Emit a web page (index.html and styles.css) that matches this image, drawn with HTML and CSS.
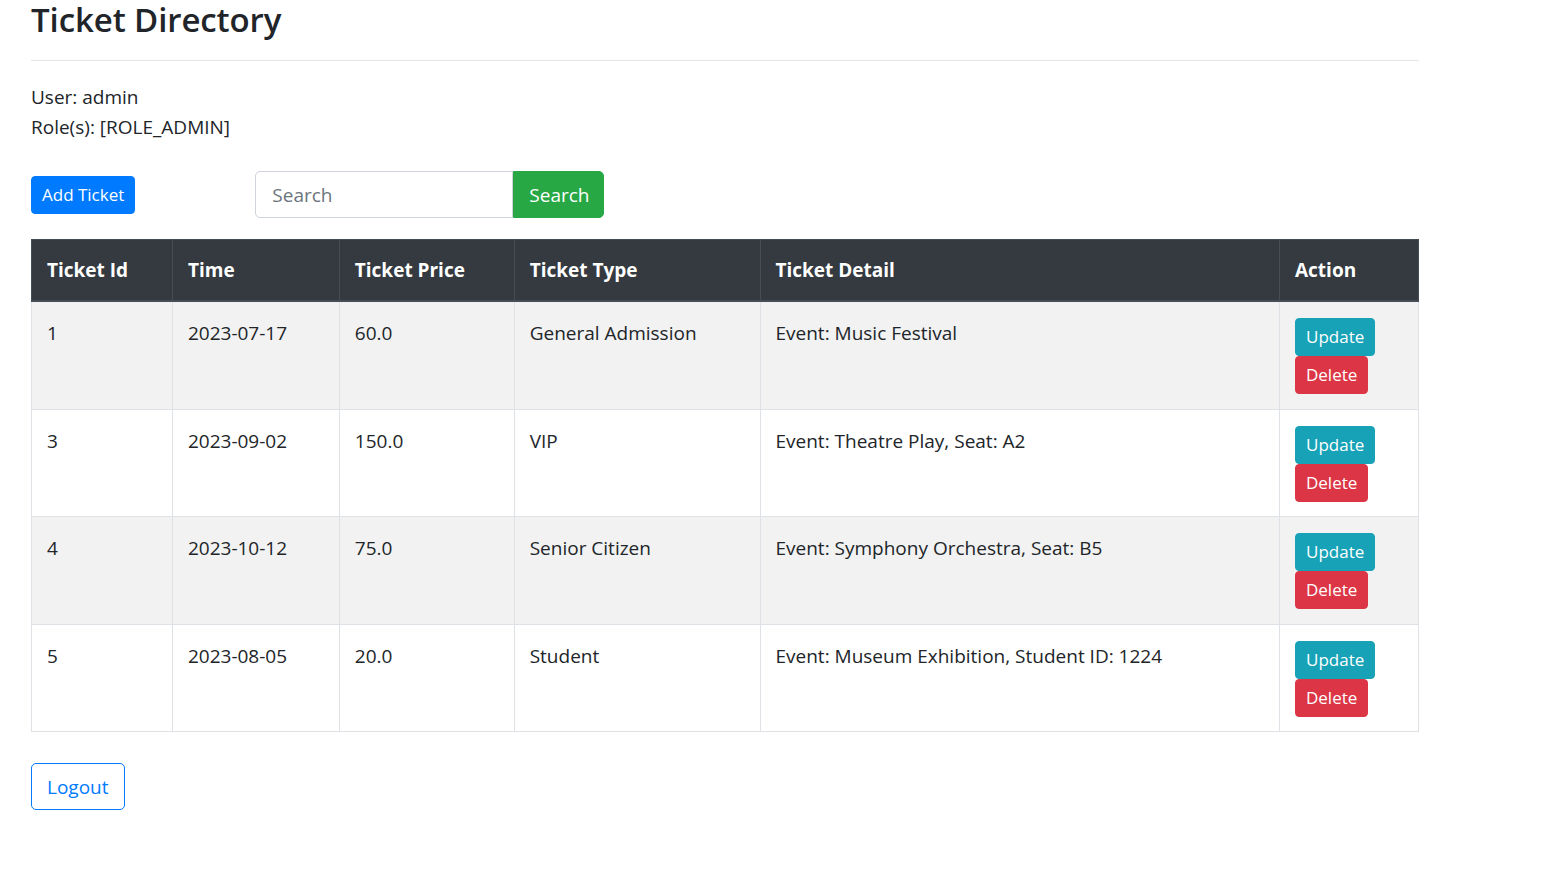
FILE: index.html
```html
<!DOCTYPE html>
<html lang="en">
<head>
<meta charset="utf-8">
<title>Ticket Directory</title>
<link rel="stylesheet" href="styles.css">
</head>
<body>
<div class="page">
  <h2 class="title">Ticket Directory</h2>
  <hr class="divider">
  <div class="user-info">
    <div>User: admin</div>
    <div>Role(s): [ROLE_ADMIN]</div>
  </div>
  <div class="toolbar">
    <a class="btn btn-primary add-btn" href="#">Add Ticket</a>
    <form class="search-group" onsubmit="return false">
      <input class="search-input" type="text" placeholder="Search">
      <button class="btn-lg btn-success search-btn" type="submit">Search</button>
    </form>
  </div>
  <table class="tickets">
    <thead>
      <tr>
        <th class="c-id">Ticket Id</th>
        <th class="c-time">Time</th>
        <th class="c-price">Ticket Price</th>
        <th class="c-type">Ticket Type</th>
        <th class="c-detail">Ticket Detail</th>
        <th class="c-action">Action</th>
      </tr>
    </thead>
    <tbody>
      <tr>
        <td>1</td><td>2023-07-17</td><td>60.0</td><td>General Admission</td><td>Event: Music Festival</td>
        <td><a class="btn btn-info" href="#">Update</a><a class="btn btn-danger" href="#">Delete</a></td>
      </tr>
      <tr>
        <td>3</td><td>2023-09-02</td><td>150.0</td><td>VIP</td><td>Event: Theatre Play, Seat: A2</td>
        <td><a class="btn btn-info" href="#">Update</a><a class="btn btn-danger" href="#">Delete</a></td>
      </tr>
      <tr>
        <td>4</td><td>2023-10-12</td><td>75.0</td><td>Senior Citizen</td><td>Event: Symphony Orchestra, Seat: B5</td>
        <td><a class="btn btn-info" href="#">Update</a><a class="btn btn-danger" href="#">Delete</a></td>
      </tr>
      <tr>
        <td>5</td><td>2023-08-05</td><td>20.0</td><td>Student</td><td>Event: Museum Exhibition, Student ID: 1224</td>
        <td><a class="btn btn-info" href="#">Update</a><a class="btn btn-danger" href="#">Delete</a></td>
      </tr>
    </tbody>
  </table>
  <a class="btn-lg btn-outline-primary logout" href="#">Logout</a>
</div>
</body>
</html>
```
FILE: styles.css
```css
* { box-sizing: border-box; }
html, body { margin: 0; padding: 0; background: #fff; }
body {
  font-family: "Open Sans", "Noto Sans", sans-serif;
  font-size: 19px;
  line-height: 30px;
  color: #212529;
}
.page {
  width: 1388px;
  margin-left: 31px;
}
.title {
  font-size: 33px;
  font-weight: 600;
  line-height: 40px;
  margin: 0;
  letter-spacing: -0.1px;
}
.divider {
  border: 0;
  border-top: 1px solid rgba(0,0,0,.1);
  margin: 20px 0 21px 0;
}
.user-info { line-height: 30px; }
.toolbar {
  display: flex;
  align-items: center;
  margin-top: 29px;
  margin-bottom: 21px;
}
.btn, .btn-lg {
  display: inline-block;
  text-decoration: none;
  border: 1px solid transparent;
  font-family: inherit;
  white-space: nowrap;
  vertical-align: middle;
}
.btn {
  font-size: 17px;
  line-height: 24px;
  padding: 6px 10px;
  border-radius: 4px;
  color: #fff;
}
.btn-lg {
  font-size: 19px;
  line-height: 30px;
  padding: 7px 15px;
  border-radius: 5px;
}
.btn-primary { background: #007bff; border-color: #007bff; }
.btn-success { background: #28a745; border-color: #28a745; color: #fff; }
.btn-info { background: #17a2b8; border-color: #17a2b8; }
.btn-danger { background: #dc3545; border-color: #dc3545; }
.btn-outline-primary { color: #007bff; border-color: #007bff; background: transparent; }
.add-btn { margin-right: 120px; }
.search-group { display: flex; margin: 0; }
.search-input {
  width: 258px;
  height: 47px;
  padding: 8px 16px;
  font-family: inherit;
  font-size: 19px;
  line-height: 30px;
  color: #495057;
  border: 1px solid #ced4da;
  border-radius: 5px 0 0 5px;
  outline: none;
}
.search-input::placeholder { color: #6c757d; }
.search-btn {
  height: 47px;
  padding: 7px 14px 7px 15px;
  border-radius: 0 5px 5px 0;
  cursor: pointer;
}
.tickets {
  width: 1388px;
  border-collapse: collapse;
  margin-bottom: 31px;
}
.tickets th, .tickets td {
  border: 1px solid #dee2e6;
  padding: 16px 15px 14.5px 15px;
  text-align: left;
  vertical-align: top;
  line-height: 30px;
}
.tickets thead th {
  background: #343a40;
  color: #fff;
  font-weight: 700;
  border-color: #454d55;
  border-bottom-width: 2px;
  padding: 15px 15px 15px 15px;
}
.tickets tbody tr:nth-child(odd) { background: #f2f2f2; }
.tickets td .btn { display: block; width: fit-content; }
.c-id { width: 141px; }
.c-time { width: 167px; }
.c-price { width: 175px; }
.c-type { width: 246px; }
.c-detail { width: 520px; }
.c-action { width: 139px; }
.logout { margin-bottom: 60px; padding-top: 7.5px; padding-bottom: 7.5px; }
```
